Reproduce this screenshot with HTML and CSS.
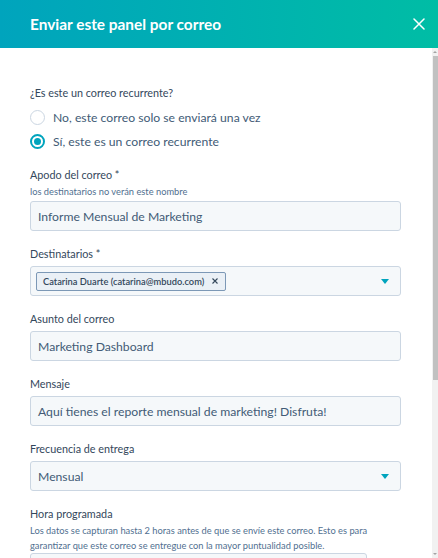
FILE: index.html
```html
<!DOCTYPE html>
<html lang="es">
<head>
<meta charset="utf-8">
<title>Enviar este panel por correo</title>
<link rel="stylesheet" href="styles.css">
</head>
<body>
<div class="panel">
  <header class="panel-header">
    <h1 class="panel-title">Enviar este panel por correo</h1>
    <button class="close-btn" type="button" aria-label="Cerrar">
      <svg width="12" height="12" viewBox="0 0 12 12"><path d="M1 1L11 11M11 1L1 11" stroke="#fff" stroke-width="1.5" stroke-linecap="round"/></svg>
    </button>
  </header>
  <div class="panel-body">
    <form class="form">
      <div class="field field-radios">
        <div class="label">¿Es este un correo recurrente?</div>
        <div class="radio-list">
          <label class="radio"><span class="radio-circle"></span><span class="radio-text">No, este correo solo se enviará una vez</span></label>
          <label class="radio"><span class="radio-circle is-checked"></span><span class="radio-text">Sí, este es un correo recurrente</span></label>
        </div>
      </div>

      <div class="field">
        <div class="label label-help">Apodo del correo *</div>
        <div class="help help-tight">los destinatarios no verán este nombre</div>
        <div class="input"><span class="input-value">Informe Mensual de Marketing</span></div>
      </div>

      <div class="field">
        <div class="label">Destinatarios *</div>
        <div class="input select">
          <span class="tag"><span class="tag-text">Catarina Duarte (catarina@mbudo.com)</span><svg class="tag-x" width="6" height="6" viewBox="0 0 6 6"><path d="M0.5 0.5L5.5 5.5M5.5 0.5L0.5 5.5" stroke="#33475b" stroke-width="1.1"/></svg></span>
          <span class="caret"></span>
        </div>
      </div>

      <div class="field">
        <div class="label">Asunto del correo</div>
        <div class="input"><span class="input-value">Marketing Dashboard</span></div>
      </div>

      <div class="field">
        <div class="label">Mensaje</div>
        <div class="input"><span class="input-value">Aquí tienes el reporte mensual de marketing! Disfruta!</span></div>
      </div>

      <div class="field">
        <div class="label">Frecuencia de entrega</div>
        <div class="input select"><span class="input-value">Mensual</span><span class="caret"></span></div>
      </div>

      <div class="field field-last">
        <div class="label label-help">Hora programada</div>
        <div class="help">Los datos se capturan hasta 2 horas antes de que se envíe este correo. Esto es para garantizar que este correo se entregue con la mayor puntualidad posible.</div>
        <div class="input input-time"></div>
      </div>
    </form>
    <div class="scrollbar" aria-hidden="true">
      <span class="sb-arrow"><span class="sb-tri sb-up"></span></span>
      <span class="sb-thumb"></span>
      <span class="sb-track"></span>
      <span class="sb-arrow"><span class="sb-tri sb-down"></span></span>
    </div>
  </div>
</div>
</body>
</html>
```

FILE: styles.css
```css
* { box-sizing: border-box; }
html, body { margin: 0; padding: 0; }
body {
  font-family: Lato, "Open Sans", sans-serif;
  color: #33475b;
  background: #fff;
  overflow: hidden;
}
.panel {
  height: 100vh;
  display: flex;
  flex-direction: column;
  overflow: hidden;
}
.panel-header {
  flex: 0 0 48px;
  height: 48px;
  display: flex;
  align-items: center;
  justify-content: space-between;
  padding: 0 13px 0 30px;
  background: linear-gradient(to right, #00a4bd, #00bda5);
}
.panel-title {
  margin: 0;
  color: #fff;
  font-size: 15.4px;
  font-weight: 700;
  line-height: 20px;
}
.close-btn {
  border: 0;
  background: transparent;
  padding: 0;
  width: 12px;
  height: 12px;
  display: flex;
}
.panel-body {
  flex: 1;
  min-height: 0;
  display: flex;
  overflow: hidden;
}
.form {
  flex: 1;
  min-width: 0;
  padding: 36px 31px 0 30px;
}
.field { margin-bottom: 14px; }
.field-radios { margin-bottom: 13px; }
.label {
  font-size: 10.8px;
  line-height: 18px;
  margin-bottom: 3px;
  color: #33475b;
}
.label-help { margin-bottom: 0; }
.radio-list { display: flex; flex-direction: column; }
.radio {
  display: flex;
  align-items: center;
  height: 24px;
  gap: 8px;
}
.radio-circle {
  flex: 0 0 15px;
  width: 15px;
  height: 15px;
  border-radius: 50%;
  border: 1px solid #cbd6e2;
  background: #fff;
  display: flex;
  align-items: center;
  justify-content: center;
}
.radio-circle.is-checked { border: 2px solid #00a4bd; }
.radio-circle.is-checked::after {
  content: "";
  width: 7px;
  height: 7px;
  border-radius: 50%;
  background: #00a4bd;
}
.radio-text {
  font-size: 12.2px;
  color: #425b76;
}
.help {
  font-size: 9.3px;
  line-height: 15px;
  color: #516f90;
}
.help-tight { margin-bottom: 2px; }
.input {
  height: 30px;
  display: flex;
  align-items: center;
  padding: 0 11px 0 7px;
  border: 1px solid #cbd6e2;
  border-radius: 3px;
  background: #f5f8fa;
}
.input-value {
  font-size: 12.2px;
  color: #425b76;
}
.select { justify-content: space-between; }
.caret {
  width: 0;
  height: 0;
  border-left: 4.5px solid transparent;
  border-right: 4.5px solid transparent;
  border-top: 5px solid #00a4bd;
}
.tag {
  display: flex;
  align-items: center;
  gap: 8px;
  height: 19px;
  margin-left: -2px;
  padding: 0 7px 0 6px;
  border: 1px solid #7c98b6;
  border-radius: 2px;
  background: #eaf0f6;
}
.tag-text {
  font-size: 9.3px;
  font-weight: 600;
  color: #33475b;
}
.tag-x { display: block; }
.input-time { width: 337px; }

.scrollbar {
  flex: 0 0 6px;
  width: 6px;
  display: flex;
  flex-direction: column;
  background: #f1f1f1;
}
.sb-arrow {
  flex: 0 0 8px;
  display: flex;
  align-items: center;
  justify-content: center;
}
.sb-tri { width: 0; height: 0; border-left: 2px solid transparent; border-right: 2px solid transparent; }
.sb-up { border-bottom: 2px solid #a3a3a3; }
.sb-down { border-top: 2px solid #a3a3a3; }
.sb-thumb {
  flex: 0 0 324px;
  margin-left: 1px;
  background: #c1c1c1;
}
.sb-track { flex: 1; }
```
